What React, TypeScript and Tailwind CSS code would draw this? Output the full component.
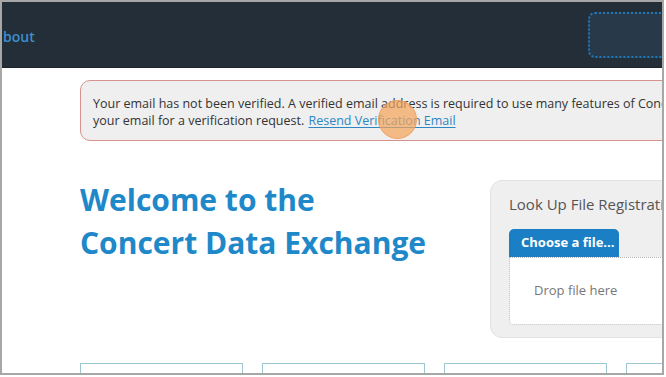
import React from 'react';

const font = { fontFamily: '"Open Sans", "Noto Sans", sans-serif' };

const Header: React.FC = () => (
  <header className="h-[66px] shrink-0 bg-[#232e39] border-b border-[#1b242d] flex items-center">
    <a className="pl-px pt-[4px] text-[14px] font-semibold text-[#3b8fcd]">bout</a>
    <div className="ml-auto -mr-[26px] shrink-0 w-[100px] h-[46px] rounded-[7px] border-2 border-dotted border-[#1f78b8] bg-[#28394a]" />
  </header>
);

const Alert: React.FC = () => (
  <div className="relative w-[700px] h-[61px] shrink-0 rounded-[10px] border border-[#d8918f] bg-[#efefef] pl-3 pt-[14px] text-[12.5px] leading-[17px] text-[#333] whitespace-nowrap">
    <p>Your email has not been verified. A verified email address is required to use many features of Concert Data Exchange.</p>
    <p>
      your email for a verification request.{' '}
      <a className="ml-px text-[#2d87c5] underline underline-offset-2">Resend Verification Email</a>
    </p>
    <span className="absolute left-[297px] top-[19px] w-[39px] h-[39px] rounded-full bg-[#f6a45a]/70 border border-[#f0a060]" />
  </div>
);

const Lookup: React.FC = () => (
  <div className="mt-1 w-[200px] shrink-0 h-[158px] rounded-[12px] border border-[#e2e2e2] bg-[#efefef] pl-[18px] pt-[12px]">
    <div className="text-[15px] leading-[22px] text-[#555] whitespace-nowrap">Look Up File Registration</div>
    <div className="mt-[14px] w-[110px] h-[28px] rounded-t-[5px] bg-[#1a7fc5] pl-3 flex items-center text-[13px] font-bold text-white">
      Choose a file...
    </div>
    <div className="h-[68px] rounded-b-[5px] border border-dotted border-[#b8b8b8] bg-white pl-6 flex items-center text-[13px] text-[#777]">
      Drop file here
    </div>
  </div>
);

const App: React.FC = () => (
  <div style={font} className="w-[666px] h-[377px] bg-white">
    <div className="w-[664px] h-[375px] border-2 border-[#a7a7a7] overflow-hidden flex flex-col">
      <Header />
      <main className="pl-[78px] pt-[12px] flex flex-col">
        <Alert />
        <div className="mt-[35px] flex">
          <h1 className="w-[410px] shrink-0 pt-[2px] text-[30px] leading-[43px] font-bold text-[#1e88c9]">
            Welcome to the
            <br />
            Concert Data Exchange
          </h1>
          <Lookup />
        </div>
        <div className="mt-[25px] flex gap-[19px]">
          {[0, 1, 2, 3].map((i) => (
            <div key={i} className="w-[163px] h-[20px] shrink-0 border border-[#9cc6d2]" />
          ))}
        </div>
      </main>
    </div>
  </div>
);

export default App;
